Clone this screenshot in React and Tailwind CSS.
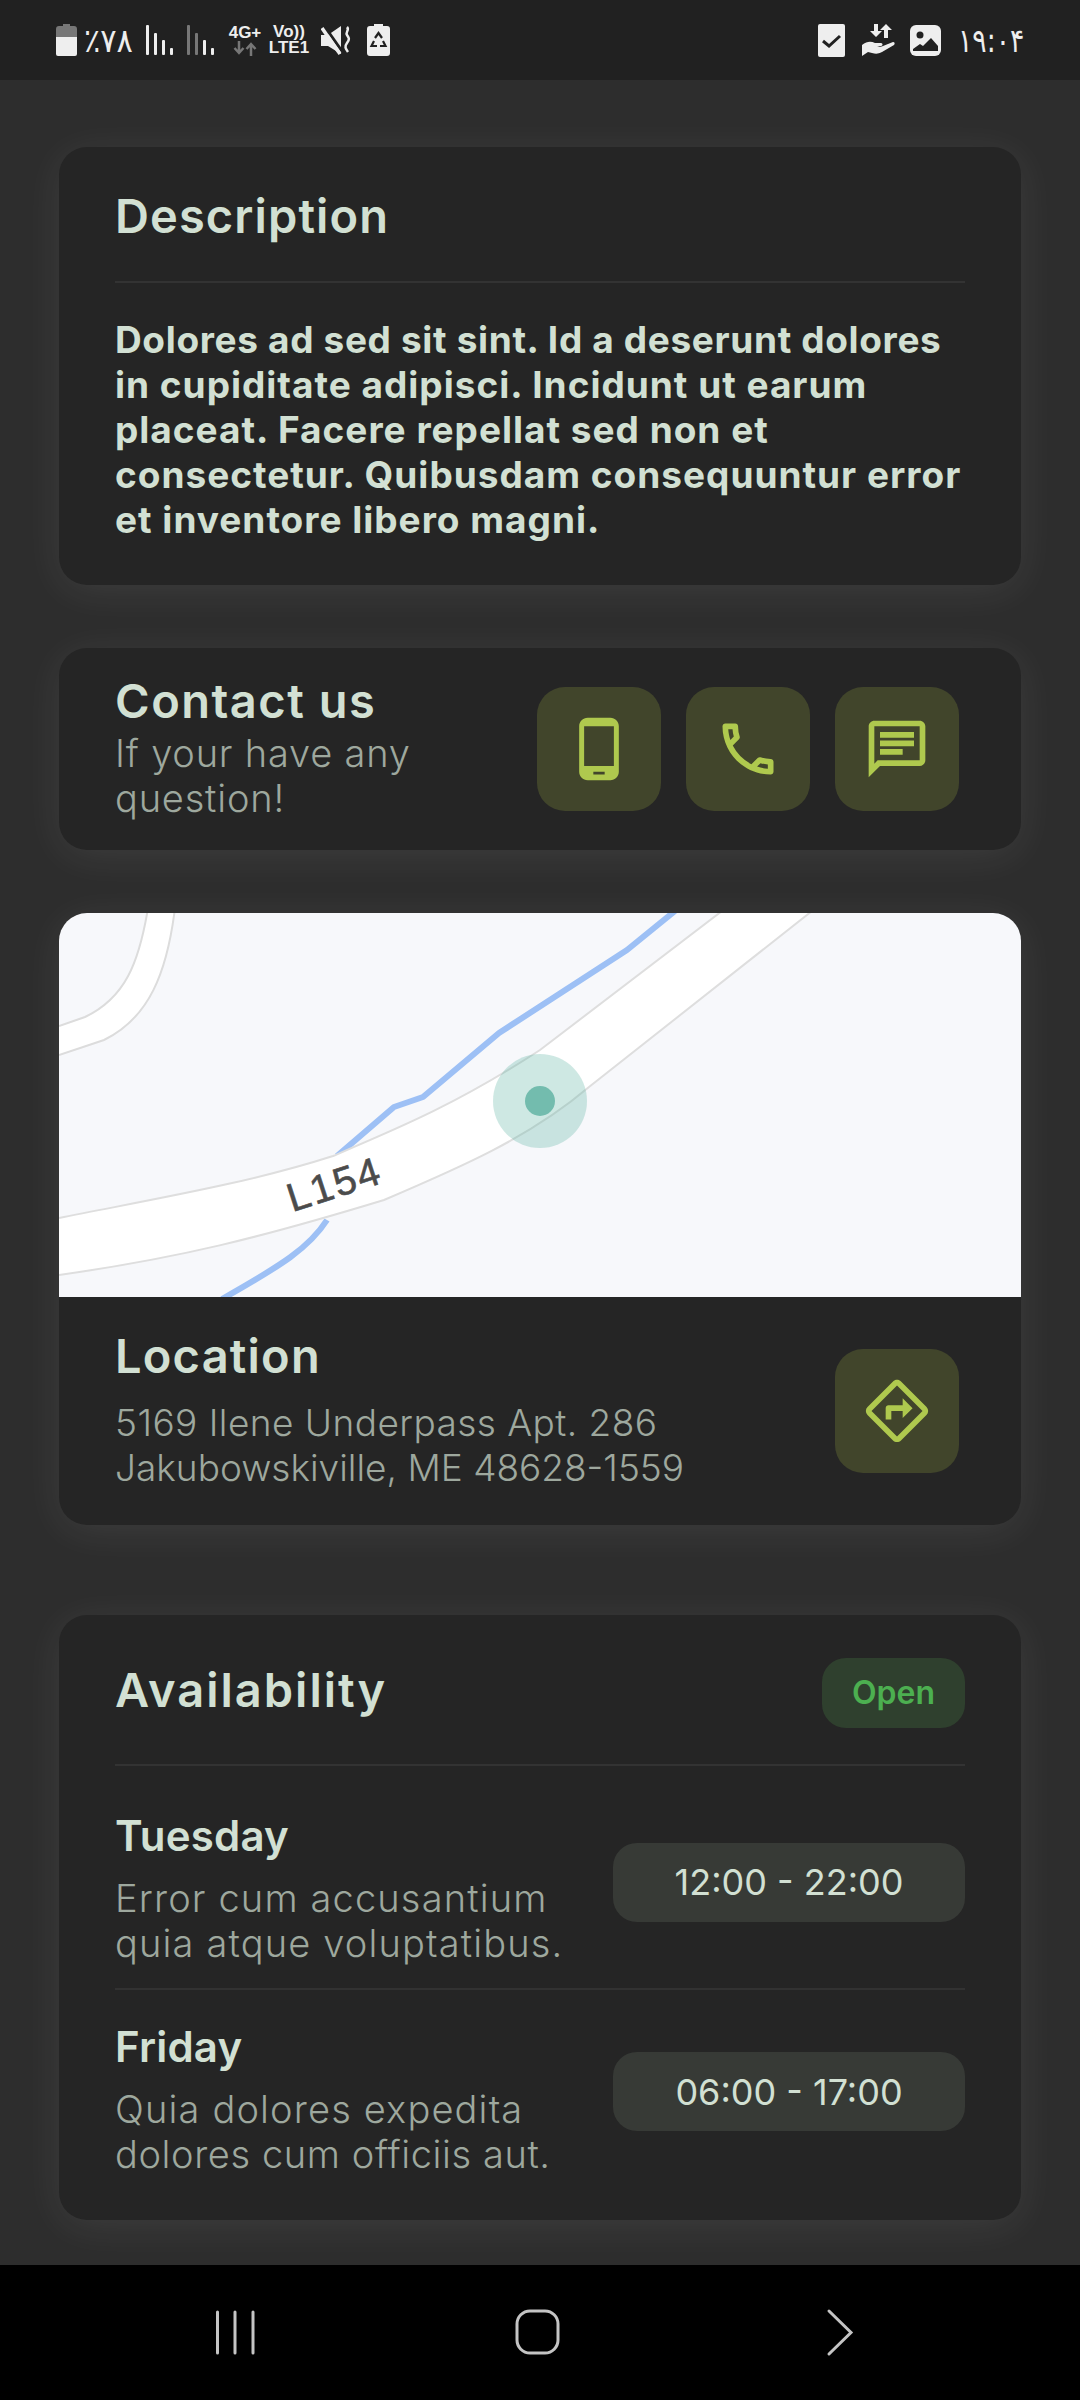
import React from "react";
import { MdPhoneAndroid, MdOutlineCall, MdOutlineChat, MdOutlineDirections } from "react-icons/md";

const Sans = '"Inter","Noto Sans",sans-serif';

function Action({ icon: Icon, size = 68 }) {
  return (
    <div className="flex h-[124px] w-[124px] shrink-0 items-center justify-center rounded-[28px] bg-[#41452b] text-[#afc94e]">
      <Icon size={size} />
    </div>
  );
}

function Bars({ dim }) {
  return (
    <svg width="28" height="30" viewBox="0 0 28 30">
      <rect x="0" y="0" width="3" height="30" rx="1" fill={dim ? "#777" : "#eee"} />
      <rect x="8" y="8" width="3" height="22" rx="1" fill={dim ? "#777" : "#eee"} />
      <rect x="16" y="15" width="3" height="15" rx="1" fill="#eee" />
      <rect x="24" y="23" width="3" height="7" rx="1" fill="#eee" />
    </svg>
  );
}

function StatusBar() {
  return (
    <div className="flex h-[80px] shrink-0 items-center justify-between bg-[#212121] pl-[56px] pr-[55px] text-[#eeeeee]" style={{ fontFamily: '"DejaVu Sans",sans-serif' }}>
      <div className="flex items-center">
        <svg width="21" height="32" viewBox="0 0 21 32" className="mr-[7px]">
          <path d="M7 0h7v2h4a3 3 0 0 1 3 3v8H0V5a3 3 0 0 1 3-3h4z" fill="#777" />
          <path d="M0 13h21v17a2 2 0 0 1-2 2H2a2 2 0 0 1-2-2z" fill="#eee" />
        </svg>
        <span className="mr-[13px] inline-block w-[49px] origin-left scale-x-[0.92] text-[33px] leading-none whitespace-nowrap">٪۷۸</span>
        <div className="mr-[13px]"><Bars /></div>
        <div className="mr-[13px]"><Bars dim /></div>
        <div className="mr-[8px] flex w-[34px] flex-col items-center text-[17px] font-bold leading-[16px]" style={{ fontFamily: '"Liberation Sans",sans-serif' }}>
          <span>4G+</span>
          <svg width="24" height="15" viewBox="0 0 24 15">
            <path d="M6 0v11M1.5 7 6 12l4.500-5M18 15V3M13.500 8 18 3l4.500 5" fill="none" stroke="#777" strokeWidth="2.500" />
          </svg>
        </div>
        <div className="mr-[13px] flex w-[38px] flex-col items-center text-[17px] font-bold leading-[16px]" style={{ fontFamily: '"Liberation Sans",sans-serif' }}>
          <span>Vo))</span>
          <span>LTE1</span>
        </div>
        <svg width="30" height="30" viewBox="0 0 30 30" className="mr-[16px]">
          <path d="M0 10h7L20 1v28L7 21H0z" fill="#eee" />
          <path d="M4 2 23 29" stroke="#212121" strokeWidth="3" />
          <path d="M1 3 19 29" stroke="#eee" strokeWidth="3.500" />
          <path d="M26 2c3 3-2 5 0 8s3 4 0 8-1 6 1 9" fill="none" stroke="#eee" strokeWidth="2.500" />
        </svg>
        <svg width="23" height="32" viewBox="0 0 23 32">
          <path d="M7 0h9v2h4a3 3 0 0 1 3 3v24a3 3 0 0 1-3 3H3a3 3 0 0 1-3-3V5a3 3 0 0 1 3-3h4z" fill="#eee" />
          <path d="M8 14l3.500-5 3.500 5M7 17l-2.500 5H10M13 22h5.500L16 17" fill="none" stroke="#212121" strokeWidth="2.200" />
        </svg>
      </div>
      <div className="flex items-center">
        <svg width="27" height="33" viewBox="0 0 27 33" className="mr-[17px]">
          <rect width="27" height="33" rx="2" fill="#eee" />
          <path d="M5 17l6 5 11-10" fill="none" stroke="#212121" strokeWidth="3" />
        </svg>
        <svg width="33" height="32" viewBox="0 0 33 32" className="mr-[15px]">
          <path d="M12 0h4v7h4l-6 6-6-6h4zM24 0l6 6h-4v8h-4V6h-4z" fill="#eee" />
          <path d="M0 21c5-4 9-4 13-2h6c2 0 2 3 0 3h-4c3 1 4 1 6 0l10-4c2 0 2 2 1 3l-12 7c-4 2-6 2-10 1l-4-1-6 4z" fill="#eee" />
        </svg>
        <svg width="31" height="31" viewBox="0 0 31 31" className="mr-[17px]">
          <rect width="31" height="31" rx="6" fill="#eee" />
          <circle cx="10" cy="10" r="3.500" fill="#212121" />
          <path d="M3 26v-2l7-5 3 2 8-8 7 8v5z" fill="#212121" />
        </svg>
        <span className="inline-block w-[67px] origin-left scale-x-[0.81] text-[33px] leading-none whitespace-nowrap">۱۹:۰۴</span>
      </div>
    </div>
  );
}

function MapView() {
  return (
    <svg viewBox="0 0 962 384" className="block h-[384px] w-[962px] bg-[#f7f8fb]">
      <path d="M89 -5C80 50 66 85 26 104L0 113V142L45 127C90 105 108 60 116 -5Z" fill="#fff" />
      <path d="M89 -5C80 50 66 85 26 104L0 113M0 142 45 127C90 105 108 60 116 -5" fill="none" stroke="#dcdcdc" strokeWidth="2" />
      <path d="M616 -2 568 37 440 120 364 184 335 194 278 243" fill="none" stroke="#9dc0f5" strokeWidth="6" strokeLinejoin="round" />
      <path d="M268 307C250 335 223 352 163 386" fill="none" stroke="#9dc0f5" strokeWidth="6" />
      <path d="M0 305C100 285 190 270 274 243C340 215 400 190 481 137L663 -2H753L530 174C470 225 400 255 325 287C200 325 120 345 0 362Z" fill="#fff" />
      <path d="M0 305C100 285 190 270 274 243C340 215 400 190 481 137L663 -2" fill="none" stroke="#dedede" strokeWidth="2" />
      <path d="M0 362C120 345 200 325 325 287C400 255 470 225 530 174L753 -2" fill="none" stroke="#dedede" strokeWidth="2" />
      <text x="275" y="285" textAnchor="middle" fontSize="40" fontFamily="Liberation Sans" letterSpacing="2" stroke="#4b4b4b" strokeWidth="0.6" fill="#4b4b4b" transform="rotate(-18 275 271)">L154</text>
      <circle cx="481" cy="188" r="47" fill="#5db3a1" fillOpacity="0.3" />
      <circle cx="481" cy="188" r="15" fill="#73bcae" />
    </svg>
  );
}

const cardCls = "rounded-[28px] bg-[#252525] shadow-[0_6px_40px_rgba(255,255,255,0.08)]";
const titleCls = "text-[47px] font-semibold text-[#d2e0d3]";

function Day({ name, lines, time, bordered, pillMb, line2Track }) {
  return (
    <div className={"flex items-center justify-between " + (bordered ? "border-b-2 border-[#323232] pb-[22px]" : "")}>
      <div>
        <div className="text-[42px] font-semibold leading-[52px] tracking-[0.2px] text-[#d2e0d3]">{name}</div>
        <div className="mt-[14px] text-[38px] font-light leading-[45px] tracking-[1.15px] text-[#9ea89e] whitespace-nowrap">
          {lines[0]}<br /><span className={line2Track}>{lines[1]}</span>
        </div>
      </div>
      <div className={"flex h-[79px] w-[352px] items-center justify-center rounded-[24px] bg-[#373a36] text-[36px] font-normal text-[#d2e0d3] " + pillMb}>{time}</div>
    </div>
  );
}

export default function App() {
  return (
    <div className="flex h-[2400px] w-[1080px] flex-col overflow-hidden bg-[#2d2d2d]" style={{ fontFamily: Sans }}>
      <StatusBar />
      <main className="flex-1 overflow-hidden px-[59px] pt-[67px]">
        <section className={cardCls + " h-[438px] px-[56px] pt-[36px]"}>
          <h2 className={titleCls + " leading-[66px] tracking-[1.1px]"}>Description</h2>
          <div className="mt-[32px] h-[2px] bg-[#333333]" />
          <p className="mt-[34px] text-[37px] font-bold leading-[45px] tracking-[1px] text-[#d2e0d3] whitespace-nowrap">
            <span className="tracking-[0.65px]">Dolores ad sed sit sint. Id a deserunt dolores</span><br />
            in cupiditate adipisci. Incidunt ut earum<br />
            placeat. Facere repellat sed non et<br />
            consectetur. Quibusdam consequuntur error<br />
            et inventore libero magni.
          </p>
        </section>

        <section className={cardCls + " mt-[63px] flex h-[202px] items-center justify-between pl-[56px] pr-[62px]"}>
          <div className="pb-[3px]">
            <h2 className={titleCls + " leading-[54px] tracking-[1.5px]"}>Contact us</h2>
            <p className="mt-[3px] text-[38px] font-light leading-[45px] tracking-[0.8px] text-[#9ea89e]">If your have any<br />question!</p>
          </div>
          <div className="flex gap-[25px]">
            <Action icon={MdPhoneAndroid} />
            <Action icon={MdOutlineCall} />
            <Action icon={MdOutlineChat} />
          </div>
        </section>

        <section className={cardCls + " mt-[63px] h-[612px] overflow-hidden"}>
          <MapView />
          <div className="flex h-[228px] items-center justify-between pl-[56px] pr-[62px]">
            <div className="pb-[3px]">
              <h2 className={titleCls + " leading-[54px] tracking-[1.2px]"}>Location</h2>
              <p className="mt-[17px] text-[37px] font-light leading-[45px] text-[#9ea89e] whitespace-nowrap"><span className="tracking-[0.45px]">5169 Ilene Underpass Apt. 286</span><br />Jakubowskiville, ME 48628-1559</p>
            </div>
            <Action icon={MdOutlineDirections} />
          </div>
        </section>

        <section className={cardCls + " mt-[90px] h-[605px] px-[56px] pt-[43px]"}>
          <div className="flex h-[70px] items-center justify-between">
            <h2 className={titleCls + " pb-[6px] tracking-[2px]"}>Availability</h2>
            <div className="flex h-[70px] w-[143px] items-center justify-center rounded-[24px] bg-[#2f402e] text-[32px] font-semibold text-[#4caf50]">Open</div>
          </div>
          <div className="mb-[44px] mt-[36px] h-[2px] bg-[#333333]" />
          <Day bordered name="Tuesday" lines={["Error cum accusantium", "quia atque voluptatibus."]} time="12:00 - 22:00" pillMb="mb-[12px]" line2Track="" />
          <div className="mt-[31px]">
            <Day name="Friday" lines={["Quia dolores expedita", "dolores cum officiis aut."]} time="06:00 - 17:00" pillMb="mb-[15px]" line2Track="tracking-[0.6px]" />
          </div>
        </section>
      </main>
      <nav className="flex h-[135px] shrink-0 items-center bg-black">
        <svg width="1080" height="135" viewBox="0 0 1080 135">
          <g stroke="#c4c4c4" strokeWidth="3" strokeLinecap="round" fill="none">
            <path d="M217.500 47V88M235 47V88M253 47V88" />
            <rect x="517" y="46" width="41" height="42" rx="13" />
            <path d="M829 46 851 67.500 829 89" />
          </g>
        </svg>
      </nav>
    </div>
  );
}
